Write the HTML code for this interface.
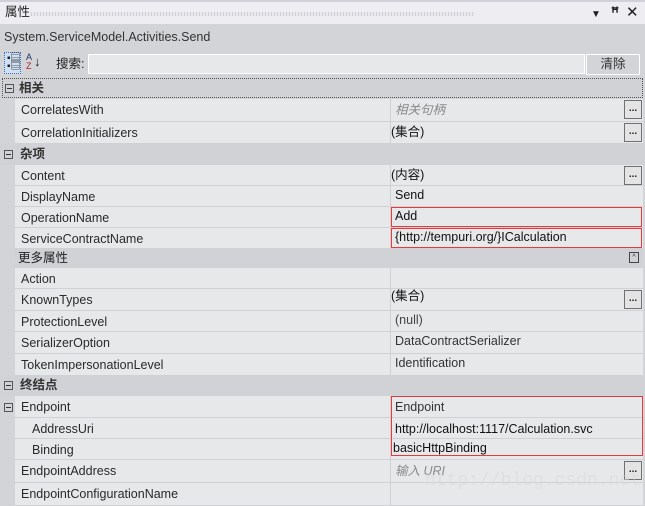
<!DOCTYPE html>
<html><head><meta charset="utf-8"><style>
*{margin:0;padding:0;box-sizing:border-box}
body{width:645px;height:506px;overflow:hidden;background:#d3d4d7;font-family:"Liberation Sans","Noto Sans CJK SC",sans-serif;font-size:12.5px;line-height:15px;color:#1e1e1e;position:relative}
.a{position:absolute}
.title{left:0;top:0;width:645px;height:24px;background:#eeeef2;border-top:2px solid #d0d0d8}
.row{position:absolute;left:15px;width:628px;background:#e7e8ea;border-bottom:1px solid #d0d1d4}
.row .n{position:absolute;left:6px;top:4px;color:#2a2a2a;line-height:15px}
.row .v{position:absolute;left:380px;top:4px;color:#111;line-height:15px}
.row .d{position:absolute;left:375px;top:0;bottom:0;width:1px;background:#d0d1d4}
.cat{position:absolute;left:0;width:645px;background:#d1d2d5}
.cat span{position:absolute;left:20px;top:3px;font-weight:bold;color:#333;line-height:15px}
.pm{position:absolute;width:9px;height:9px;border:1px solid #555;font-size:0}
.pm:after{content:"";position:absolute;left:1px;top:3px;width:5px;height:1px;background:#333}
.btn{position:absolute;right:1px;top:1px;width:18px;height:19px;border:1px solid #707070;background:#e4e4e4;font-size:10px;text-align:center;line-height:16px;font-weight:bold}
.red{position:absolute;border:1px solid #e83a3a;z-index:5}
.row .v.i{color:#8a8a8a;font-style:italic}
</style></head><body>
<div class="a title"><span class="a" style="left:5px;top:3px;color:#222">属性</span>
<div class="a" style="left:30px;top:10px;width:445px;height:4px;background-image:radial-gradient(#b0b0b8 0.7px,transparent 0.9px);background-size:3px 2px"></div>
<span class="a" style="left:591px;top:5px;font-size:10px">▼</span>
<span class="a" style="left:611px;top:3px;font-size:14px;font-weight:bold">ꟸ</span>
<span class="a" style="left:626px;top:3px;font-size:15px">✕</span></div>
<span class="a" style="left:4px;top:30px;color:#333">System.ServiceModel.Activities.Send</span>
<div class="a" style="left:4px;top:52px;width:17px;height:22px;border:1px dotted #3b6fb0;background:#cfe0f3"></div>
<span class="a" style="left:7px;top:55px;font-size:10px;line-height:8px">▪▤<br>▪▤</span>
<span class="a" style="left:26px;top:53px;font-size:9px;line-height:9px;color:#a23"><span style="color:#236">A</span><br>Z</span>
<span class="a" style="left:34px;top:54px;font-size:13px">↓</span>
<span class="a" style="left:56px;top:57px;color:#222">搜索:</span>
<div class="a" style="left:88px;top:54px;width:497px;height:20px;background:#e7e8ea;border:1px solid #fff"></div>
<div class="a" style="left:586px;top:54px;width:54px;height:21px;border:1px solid #fff;background:#d3d4d7;text-align:center;line-height:19px;color:#333">清除</div>

<div class="cat" style="top:78px;height:20px;border:1px dotted #555;left:2px;width:641px"><div class="pm" style="left:2px;top:5px"></div><span style="left:16px;top:2px">相关</span></div>
<div class="row" style="top:99px;height:23px"><div class="d"></div><span class="n">CorrelatesWith</span><span class="v i">相关句柄</span><div class="btn">...</div></div>
<div class="row" style="top:122px;height:22px"><div class="d"></div><span class="n">CorrelationInitializers</span><span class="v" style="left:376px;top:3px">(集合)</span><div class="btn">...</div></div>
<div class="cat" style="top:144px;height:21px"><div class="pm" style="left:4px;top:6px"></div><span>杂项</span></div>
<div class="row" style="top:165px;height:21px"><div class="d"></div><span class="n">Content</span><span class="v" style="left:376px;top:3px">(内容)</span><div class="btn">...</div></div>
<div class="row" style="top:186px;height:21px"><div class="d"></div><span class="n">DisplayName</span><span class="v" style="top:2px">Send</span></div>
<div class="row" style="top:207px;height:21px"><div class="d"></div><span class="n">OperationName</span><span class="v" style="top:2px">Add</span></div>
<div class="row" style="top:228px;height:21px"><div class="d"></div><span class="n">ServiceContractName</span><span class="v" style="top:2px">{http://tempuri.org/}ICalculation</span></div>
<div class="red" style="left:391px;top:207px;width:251px;height:20px"></div>
<div class="red" style="left:391px;top:228px;width:251px;height:20px"></div>
<div class="cat" style="top:249px;height:19px;left:15px;width:628px"><span style="left:3px;font-weight:normal;color:#222;top:2px">更多属性</span><div class="a" style="right:4px;top:3px;width:10px;height:11px;border:1px solid #444;font-size:7px;line-height:9px;text-align:center">^</div></div>
<div class="row" style="top:268px;height:21px"><div class="d"></div><span class="n">Action</span></div>
<div class="row" style="top:289px;height:22px"><div class="d"></div><span class="n" style="top:4px">KnownTypes</span><span class="v" style="left:376px;top:0">(集合)</span><div class="btn">...</div></div>
<div class="row" style="top:311px;height:21px"><div class="d"></div><span class="n">ProtectionLevel</span><span class="v" style="color:#444;top:2px">(null)</span></div>
<div class="row" style="top:332px;height:22px"><div class="d"></div><span class="n">SerializerOption</span><span class="v" style="color:#333;top:2px">DataContractSerializer</span></div>
<div class="row" style="top:354px;height:22px"><div class="d"></div><span class="n">TokenImpersonationLevel</span><span class="v" style="color:#333;top:2px">Identification</span></div>
<div class="cat" style="top:376px;height:20px"><div class="pm" style="left:4px;top:5px"></div><span style="top:2px">终结点</span></div>
<div class="pm" style="left:4px;top:403px"></div>
<div class="row" style="top:396px;height:22px"><div class="d"></div><span class="n">Endpoint</span><span class="v" style="color:#333">Endpoint</span></div>
<div class="row" style="top:418px;height:21px"><div class="d"></div><span class="n" style="left:17px">AddressUri</span><span class="v">http://localhost:1117/Calculation.svc</span></div>
<div class="row" style="top:439px;height:21px"><div class="d"></div><span class="n" style="left:17px">Binding</span><span class="v" style="left:378px;top:2px">basicHttpBinding</span></div>
<div class="red" style="left:391px;top:396px;width:252px;height:60px"></div>
<div class="row" style="top:460px;height:23px"><div class="d"></div><span class="n">EndpointAddress</span><span class="v i">输入 URI</span><div class="btn">...</div></div>
<div class="row" style="top:483px;height:23px"><div class="d"></div><span class="n">EndpointConfigurationName</span></div>
<span class="a" style="left:425px;top:474px;font-family:'Liberation Mono',monospace;font-size:18px;color:rgba(215,215,215,0.5)">http://blog.csdn.net/</span>
</body></html>
